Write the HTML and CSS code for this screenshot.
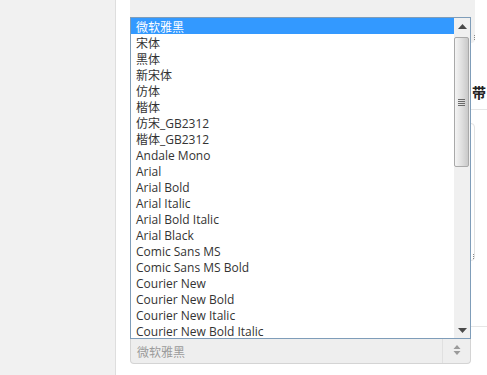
FILE: index.html
```html
<!DOCTYPE html>
<html lang="zh-CN">
<head>
    <meta charset="UTF-8">
    <title>字体选择</title>
    <link rel="stylesheet" href="styles.css">
</head>
<body>
<div class="page">
    <div class="sidebar"></div>
    <div class="content">
        <div class="form">
            <div class="box-top"><span class="grip"></span></div>
            <div class="row-label"><span class="label">带</span></div>
            <div class="box-area"><span class="grip"></span></div>
            <div class="row-line"></div>
            <div class="select">
                <span class="select-text">微软雅黑</span>
                <span class="select-arrows">
                    <svg width="8" height="12" viewBox="0 0 8 12"><path d="M4 1 L7.5 5 L0.5 5 Z M4 11 L7.5 7 L0.5 7 Z" fill="#9a9a9a"/></svg>
                </span>
            </div>
        </div>

        <div class="fontlist">
            <div class="fontlist-items">
                <div class="fontlist-item selected">微软雅黑</div>
                <div class="fontlist-item">宋体</div>
                <div class="fontlist-item">黑体</div>
                <div class="fontlist-item">新宋体</div>
                <div class="fontlist-item">仿体</div>
                <div class="fontlist-item">楷体</div>
                <div class="fontlist-item">仿宋_GB2312</div>
                <div class="fontlist-item">楷体_GB2312</div>
                <div class="fontlist-item">Andale Mono</div>
                <div class="fontlist-item">Arial</div>
                <div class="fontlist-item">Arial Bold</div>
                <div class="fontlist-item">Arial Italic</div>
                <div class="fontlist-item">Arial Bold Italic</div>
                <div class="fontlist-item">Arial Black</div>
                <div class="fontlist-item">Comic Sans MS</div>
                <div class="fontlist-item">Comic Sans MS Bold</div>
                <div class="fontlist-item">Courier New</div>
                <div class="fontlist-item">Courier New Bold</div>
                <div class="fontlist-item">Courier New Italic</div>
                <div class="fontlist-item">Courier New Bold Italic</div>
            </div>
            <div class="scrollbar">
                <div class="scroll-btn">
                    <svg width="9" height="5" viewBox="0 0 9 5"><path d="M4.5 0 L9 5 L0 5 Z" fill="#4a4a4a"/></svg>
                </div>
                <div class="scroll-track">
                    <div class="scroll-thumb">
                        <span class="thumb-grip"></span>
                    </div>
                </div>
                <div class="scroll-btn">
                    <svg width="9" height="5" viewBox="0 0 9 5"><path d="M0 0 L9 0 L4.5 5 Z" fill="#4a4a4a"/></svg>
                </div>
            </div>
        </div>
    </div>
</div>
</body>
</html>
```

FILE: styles.css
```css
html, body {
    margin: 0;
    padding: 0;
    background: #fff;
}
.page {
    display: flex;
    width: 487px;
    height: 375px;
    overflow: hidden;
    font-family: "Open Sans", "Noto Sans CJK SC", sans-serif;
}
.sidebar {
    width: 115px;
    flex: none;
    background: #f1f1f1;
    border-right: 1px solid #dedede;
}
.content {
    position: relative;
    flex: 1;
    padding-left: 14px;
    background: #fff;
}
.form {
    width: 357px;
}

/* fields behind the popup */
.box-top {
    position: relative;
    width: 345px;
    height: 43px;
    background: #f0f0f0;
    border-radius: 0 0 4px 0;
}
.grip {
    position: absolute;
    right: 0;
    bottom: 3px;
    width: 3px;
    height: 5px;
    border-right: 1px dotted #888;
}
.row-label {
    height: 67px;
    padding-top: 1px;
    border-bottom: 1px solid #e6e6e6;
    box-sizing: border-box;
}
.label {
    display: block;
    margin: 40px 0 0 342px;
    font-size: 14px;
    font-weight: bold;
    color: #222;
    white-space: nowrap;
    font-family: "Noto Sans CJK SC", sans-serif;
    line-height: 17px;
}
.box-area {
    position: relative;
    width: 343px;
    height: 136px;
    margin-top: 13px;
    border: 1px solid #e2e2e2;
    border-radius: 4px;
}
.box-area .grip {
    bottom: 1px;
}
.row-line {
    height: 65px;
    border-bottom: 1px solid #e6e6e6;
}
.select {
    display: flex;
    align-items: center;
    width: 341px;
    height: 27px;
    margin-top: 10px;
    box-sizing: border-box;
    border: 1px solid #d4d4d4;
    border-top: 0;
    border-radius: 0 0 4px 4px;
    background: #eeeeee;
}
.select-text {
    flex: 1;
    padding: 2px 0 0 6px;
    font-size: 12px;
    color: #9b9b9b;
    font-family: "Noto Sans CJK SC", sans-serif;
}
.select-arrows {
    display: flex;
    align-items: center;
    justify-content: center;
    width: 27px;
    height: 100%;
    border-left: 1px solid #e0e0e0;
}

/* open font popup */
.fontlist {
    position: absolute;
    top: 17px;
    left: 14px;
    display: flex;
    width: 341px;
    height: 322px;
    box-sizing: border-box;
    border: 1px solid #7f9db9;
    background: #fff;
}
.fontlist-items {
    flex: 1;
}
.fontlist-item {
    height: 16px;
    line-height: 19px;
    padding-left: 5px;
    font-size: 12px;
    color: #333;
    white-space: nowrap;
}
.fontlist-item.selected {
    background: #3399ff;
    color: #fff;
}
.scrollbar {
    display: flex;
    flex-direction: column;
    width: 16px;
    background: #f0f0f0;
}
.scroll-btn {
    display: flex;
    align-items: center;
    justify-content: center;
    height: 16px;
}
.scroll-track {
    flex: 1;
    padding-top: 3px;
}
.scroll-thumb {
    display: flex;
    align-items: center;
    justify-content: center;
    width: 15px;
    height: 130px;
    box-sizing: border-box;
    border: 1px solid #a9a9a9;
    border-radius: 2px;
    background: linear-gradient(to right, #f4f4f4, #e0e0e0 50%, #c9c9c9);
}
.thumb-grip {
    width: 7px;
    height: 7px;
    background: repeating-linear-gradient(to bottom, #6a6a6a 0, #6a6a6a 1px, transparent 1px, transparent 2px);
}
```
